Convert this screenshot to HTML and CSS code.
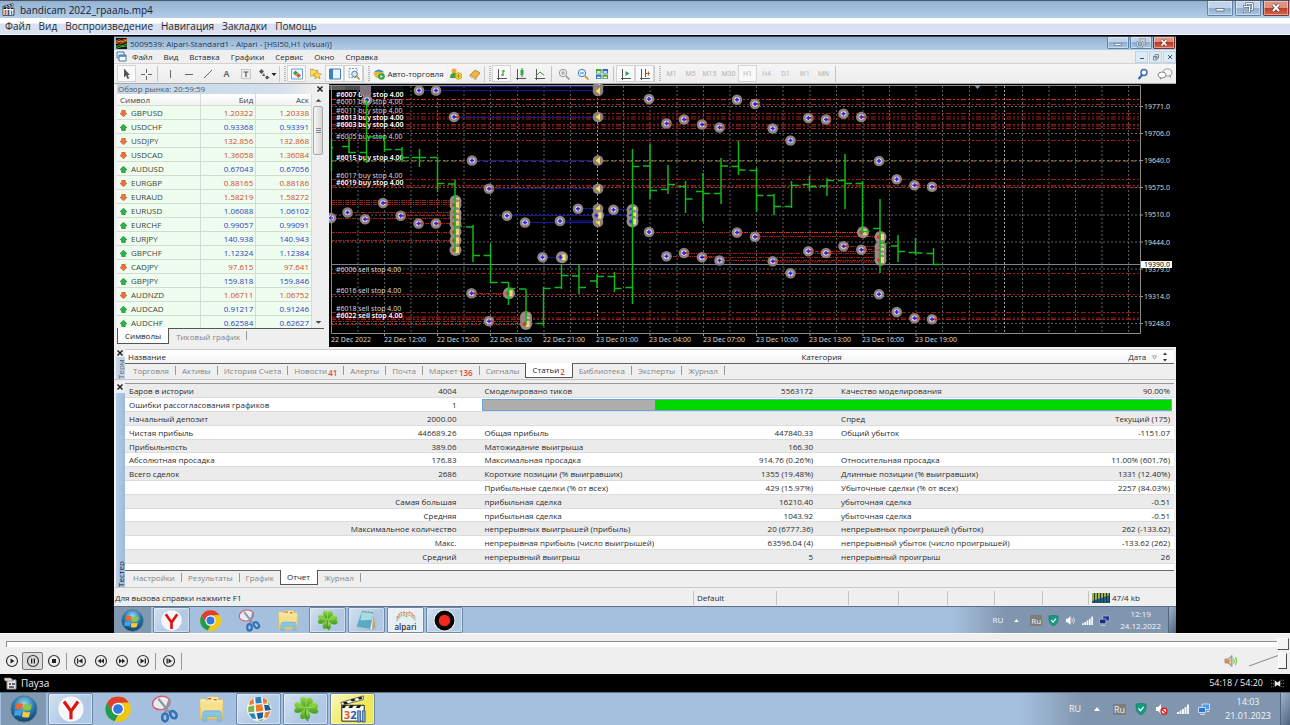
FILE: index.html
```html
<!DOCTYPE html>
<html lang="ru">
<head>
<meta charset="utf-8">
<title>bandicam 2022_грааль.mp4</title>
<link rel="stylesheet" href="styles.css">
</head>
<body>
<svg class="sprite" aria-hidden="true">
  <defs>
    <radialGradient id="orb" cx=".5" cy=".3" r=".75"><stop offset="0" stop-color="#9fd8ee"/><stop offset=".5" stop-color="#2a7db3"/><stop offset="1" stop-color="#0b3257"/></radialGradient>
    <linearGradient id="leaf" x2="0" y2="1"><stop offset="0" stop-color="#9bdc4a"/><stop offset="1" stop-color="#3f9a1c"/></linearGradient>
    <linearGradient id="fold" x2="0" y2="1"><stop offset="0" stop-color="#fbeeb0"/><stop offset="1" stop-color="#e9c95f"/></linearGradient>
  </defs>
  <symbol id="i-start" viewBox="0 0 30 30"><circle cx="15" cy="15" r="14" fill="url(#orb)" stroke="#4f7593"/><path d="M6.500 10q4-2 7.500-.5l-1.300 6q-3.500-1.500-7.500 0z" fill="#f0662f"/><path d="M15.500 9.500q3.500 2 8 .5l-1.500 6q-4 1.500-7.700-.5z" fill="#8cc83c"/><path d="M5 17q4-1.500 7.500 0l-1.300 5.500q-3.500-1.500-7 0z" fill="#3fa5ea"/><path d="M14 17.500q4 2 7.700.5l-1.300 5.500q-4 1.500-7.700-.5z" fill="#fbc93a"/></symbol>
  <symbol id="i-yandex" viewBox="0 0 30 30"><circle cx="15" cy="15" r="13.500" fill="#f7f7f9"/><path d="M7.500 7l7.500 10.500L22.500 7M15 17v9" fill="none" stroke="#e01010" stroke-width="3.400"/></symbol>
  <symbol id="i-chrome" viewBox="0 0 30 30"><circle cx="15" cy="15" r="13.500" fill="#f3c613"/><path d="M3.300 8.300A13.500 13.500 0 0 1 26.700 8.300L15 8.300 9.200 18.500z" fill="#dd4030"/><path d="M3.300 8.300l5.900 10.200 5.800 3-3.500 6.600A13.500 13.500 0 0 1 3.300 8.300z" fill="#239a50"/><path d="M11.500 28.100l9.300-9.600V8.300h5.900a13.500 13.500 0 0 1-15.200 19.800z" fill="#f3c613"/><circle cx="15" cy="15" r="6.700" fill="#fff"/><circle cx="15" cy="15" r="5.200" fill="#3278e0"/></symbol>
  <symbol id="i-snip" viewBox="0 0 30 30"><ellipse cx="11" cy="8.500" rx="9.500" ry="7" fill="#e9edf3" stroke="#d4606b" stroke-width="1.500" transform="rotate(-12 11 8.500)"/><path d="M8 4l12 15M20 4L15 19" stroke="#8e95a3" stroke-width="2.400"/><ellipse cx="15" cy="24" rx="3" ry="4.200" fill="none" stroke="#3273b8" stroke-width="2.800"/><ellipse cx="24" cy="21" rx="3" ry="4.200" fill="none" stroke="#3273b8" stroke-width="2.800" transform="rotate(-35 24 21)"/></symbol>
  <symbol id="i-folder" viewBox="0 0 30 30"><path d="M2 4h6l2 2V2h12v3h5v21H2z" fill="url(#fold)" stroke="#cfb25b" stroke-width=".6"/><path d="M11 4h3M17 5h3" stroke="#d64f3a" stroke-width="1.500"/><path d="M4 9h21v14H4z" fill="#f6df8d"/><path d="M5 28V20q0-3 3-3h14q3 0 3 3v8h-4v-5h-12v5z" fill="#86c5e6" stroke="#5fa7cf" stroke-width=".6"/></symbol>
  <symbol id="i-clover" viewBox="0 0 30 30"><g fill="url(#leaf)"><path d="M15 14C9 11 7 3 11 2q3-.5 4.500 2Q18 1.500 21 3.500c4 4-1 8.500-6 10.500z"/><path d="M15 14C10 20 3 21 2.500 17q0-2.500 2-3.500Q1.500 11.500 3 9c3-3.500 8 0 12 5z"/><path d="M15 14c4-6 10-7 12.500-4q1.500 2.500-1 4.500 3 2.500 1 4.500c-4 3-9 0-12.500-5z"/><path d="M15 14c4 4 6 10 3 12q-2.500 1-4.500-1-3 2-4.500-1c-1-4 2-7 6-10z"/></g><path d="M15 5v9L6 12.500M15 14l9-1.500M15 14l2 8" fill="none" stroke="#b9e87a" stroke-width=".7"/><path d="M15 14q-2 8 2 14" fill="none" stroke="#4d9a2a" stroke-width="1.300"/></symbol>
  <symbol id="i-notes" viewBox="0 0 30 30"><path d="M9 4l16 2 2 19-4 2-20-3z" fill="#f7f5ef" stroke="#999" stroke-width=".6"/><path d="M9 4l15 2-4 20-18-3z" fill="#5ea9c2"/><path d="M9 4l15 2-2 8-15 1z" fill="#a7dbe6"/><path d="M24 6l3 19-5 2z" fill="#b9a77f"/><path d="M9 3l15 2" stroke="#4f6f7c" stroke-width="1.500" stroke-dasharray="1 1"/></symbol>
  <symbol id="i-record" viewBox="0 0 30 30"><circle cx="15" cy="15" r="14" fill="#fff"/><circle cx="15" cy="15" r="13" fill="#050505"/><circle cx="15" cy="15" r="7.500" fill="#f4281c"/></symbol>
  <symbol id="i-globe" viewBox="0 0 30 30"><circle cx="15" cy="15" r="13.500" fill="#f1f5f7"/><g><path d="M11 2.500l6-.5 1 6.500-6.500.5z" fill="#2b82ba"/><path d="M19 2.500l5 3-1 4-3.500-.5z" fill="#ef7d2d"/><path d="M5 7l4-3.500.5 6L4.500 11z" fill="#ef7d2d"/><path d="M3.500 12.500l6-1.500.5 7-6.500.5z" fill="#7eb53c"/><path d="M11.500 10.500l7-.5 1 7-7.500 1z" fill="#ef7d2d"/><path d="M20.500 10.500l5 .5 2.500 5-6.500 1z" fill="#165f99"/><path d="M4 20l6-.5 2 6-4 0z" fill="#2b82ba"/><path d="M12.500 19.500l7-1-.5 6-5 1.500z" fill="#165f99"/><path d="M21.500 18.500l6-1-3.500 7-3.500 0z" fill="#ef7d2d"/><path d="M14 27l6-1.500-2 2.500z" fill="#7eb53c"/><path d="M25 7l2.500 5-3-2z" fill="#7eb53c"/></g><circle cx="15" cy="15" r="13.500" fill="none" stroke="#c0ccd4" stroke-width=".7"/></symbol>
  <symbol id="i-shield" viewBox="0 0 12 12"><path d="M6 0q3 1 5 1 1 8-5 11Q0 9 1 1q2 0 5-1z" fill="#149a7e" stroke="#0c6c5a" stroke-width=".5"/><path d="M3.500 5.500l2 2.200 3.200-3.800" fill="none" stroke="#fff" stroke-width="1.300"/></symbol>
  <symbol id="i-vol" viewBox="0 0 12 12"><path d="M1 4h2l3-3v10L3 8H1z" fill="#fff"/><path d="M7.500 4q1.200 2 0 4M9.300 2.500q2 3.500 0 7" fill="none" stroke="#e8eef5" stroke-width=".9"/></symbol>
  <symbol id="i-mute" viewBox="0 0 12 12"><path d="M0 4h2l3-3v10L2 8H0z" fill="#fff"/><circle cx="8" cy="8.300" r="3" fill="#fff" stroke="#dc2424" stroke-width="1.400"/><path d="M6 6.300l4 4" stroke="#dc2424" stroke-width="1.400"/></symbol>
  <symbol id="i-signal" viewBox="0 0 12 12"><path d="M1 11V9M3.500 11V7.500M6 11V6M8.500 11V4M11 11V1.500" stroke="#fff" stroke-width="1.800"/></symbol>
  <symbol id="i-net" viewBox="0 0 12 12"><path d="M4 1h7.500v5.500H4z" fill="#4a9cf0" stroke="#e4eefa" stroke-width=".8"/><path d="M.5 4.500h7v5h-7z" fill="#2f74d8" stroke="#e4eefa" stroke-width=".8"/><path d="M2 11.300h5M9 8.500h2.500" stroke="#dde9f7"/></symbol>
  <symbol id="i-netdark" viewBox="0 0 12 12"><path d="M4 1h7.500v5.500H4z" fill="#27378d" stroke="#b9c5d9" stroke-width=".8"/><path d="M.5 4.500h7v5h-7z" fill="#1c2a78" stroke="#b9c5d9" stroke-width=".8"/><path d="M2 11.300h5" stroke="#cdd6e4"/></symbol>
  <symbol id="i-min" viewBox="0 0 12 12"><path d="M2 6.500h8v2.500H2z" fill="#fff" stroke="#55687f" stroke-width=".8"/></symbol>
  <symbol id="i-restore" viewBox="0 0 12 12"><path d="M4.500 1.500h6v6h-6z" fill="#c9dbee" stroke="#44566c" stroke-width="2"/><path d="M4.500 1.500h6v6h-6z" fill="none" stroke="#fff"/><path d="M2 4.500h5.500v5.500H2z" fill="#8fb0d2" stroke="#44566c" stroke-width="2"/><path d="M2 4.500h5.500v5.500H2z" fill="none" stroke="#fff"/></symbol>
  <symbol id="i-close" viewBox="0 0 12 12"><path d="M3 2.500l6 6.500M9 2.500L3 9" stroke="#6b3b36" stroke-width="3.400"/><path d="M3 2.500l6 6.500M9 2.500L3 9" stroke="#fff" stroke-width="2"/></symbol>
  <symbol id="i-up" viewBox="0 0 8 8"><path d="M4 .3L7.800 4 6 5v2.500H2V5L.2 4z" fill="#2db44a" stroke="#15702a" stroke-width=".7"/></symbol>
  <symbol id="i-down" viewBox="0 0 8 8"><path d="M4 7.700L.2 4 2 3V.5h4V3l1.800 1z" fill="#f2723c" stroke="#b3441c" stroke-width=".7"/></symbol>
</svg>

<div class="screen">
  <header class="titlebar">
    <svg class="ic13" viewBox="0 0 13 13"><path d="M1 5h11v7.500H1z" fill="#fafaf4" stroke="#222" stroke-width=".7"/><path d="M.5 3.500L11 .5l.5 2L1 5z" fill="#fff" stroke="#222" stroke-width=".6"/><path d="M2 3.500l2 1M5 2.500l2 1M8 1.500l2 1M2 5.500h2M5.500 5.500h2M9 5.500h2" stroke="#111" stroke-width="1.200"/><path d="M3.500 7v5" stroke="#df5a24" stroke-width="1.800"/><path d="M6.500 7v5" stroke="#2757b8" stroke-width="1.800"/><path d="M9.500 7.500v5M11.500 7.500v5" stroke="#5a86c0" stroke-width="1.300"/></svg>
    <h1>bandicam 2022_грааль.mp4</h1>
    <div class="winbtns">
      <button type="button" aria-label="Свернуть"><svg><use href="#i-min"/></svg></button>
      <button type="button" aria-label="Восстановить"><svg><use href="#i-restore"/></svg></button>
      <button type="button" class="red" aria-label="Закрыть"><svg><use href="#i-close"/></svg></button>
    </div>
  </header>
  <nav class="menubar">
    <button type="button">Файл</button><button type="button">Вид</button><button type="button">Воспроизведение</button><button type="button">Навигация</button><button type="button">Закладки</button><button type="button">Помощь</button>
  </nav>

  <main class="video">
    <section class="desk">
      <header class="titlebar small">
        <svg class="ic11" viewBox="0 0 11 11"><path d="M0 0h11v11H0z" fill="#171411"/><path d="M0 3l3-1.500 2 1L11 1M0 6l3-1.500 2 1 6-2" stroke="#e04a22" fill="none"/><path d="M0 4.500l3-1.500 2 1 6-2" stroke="#e0b422" fill="none"/><path d="M0 9l3-2 2 1 6-2M0 10.500l4-1.500 7-1" stroke="#3faa35" fill="none"/></svg>
        <h2>5009539: Alpari-Standard1 - Alpari - [HSI50,H1 (visual)]</h2>
        <div class="winbtns">
          <button type="button" aria-label="Свернуть"><svg><use href="#i-min"/></svg></button>
          <button type="button" aria-label="Восстановить"><svg><use href="#i-restore"/></svg></button>
          <button type="button" class="red" aria-label="Закрыть"><svg><use href="#i-close"/></svg></button>
        </div>
      </header>
      <nav class="menubar mt">
        <svg class="ic11" viewBox="0 0 11 11"><path d="M1 1h7v6H1z" fill="#e8f2fb" stroke="#3f78b5"/><path d="M3 4h7v6H3z" fill="#fff" stroke="#3f78b5"/><path d="M3 5h7" stroke="#3f78b5" stroke-width="1.500"/></svg>
        <button type="button">Файл</button><button type="button">Вид</button><button type="button">Вставка</button><button type="button">Графики</button><button type="button">Сервис</button><button type="button">Окно</button><button type="button">Справка</button>
        <div class="mdi"><button type="button" aria-label="Свернуть график"><svg viewBox="0 0 8 8"><path d="M2 5.500h4" stroke="#456"/></svg></button><button type="button" aria-label="Восстановить график"><svg viewBox="0 0 8 8"><path d="M3 1.500h3.500V5H3zM1.500 3.500H5V7H1.500z" fill="none" stroke="#567" stroke-width=".7"/></svg></button><button type="button" aria-label="Закрыть график"><svg viewBox="0 0 8 8"><path d="M2 2l4 4M6 2L2 6" stroke="#456"/></svg></button></div>
      </nav>

      <div class="toolbar">
        <button type="button" class="on" aria-label="Курсор"><svg viewBox="0 0 12 12"><path d="M3 .5v9l2-2 1.500 3.500 1.700-.8L6.700 7H9z" fill="#555"/></svg></button>
        <button type="button" aria-label="Перекрестие"><svg viewBox="0 0 12 12"><path d="M6.500 1v4M6.500 8v4M1 6.500h4M8 6.500h4" stroke="#666"/></svg></button>
        <i class="sep"></i>
        <button type="button" aria-label="Вертикальная линия"><svg viewBox="0 0 12 12"><path d="M6.500 2v8" stroke="#666"/></svg></button>
        <button type="button" aria-label="Горизонтальная линия"><svg viewBox="0 0 12 12"><path d="M2 6.500h8" stroke="#666"/></svg></button>
        <button type="button" aria-label="Трендовая линия"><svg viewBox="0 0 12 12"><path d="M2 10l8-8" stroke="#666"/></svg></button>
        <button type="button" class="glyph">A</button>
        <button type="button" aria-label="Метка"><svg viewBox="0 0 12 12"><path d="M1.500 1.500h9v9h-9z" fill="none" stroke="#999" stroke-dasharray="1 1"/><path d="M3.500 4h5M6 4v5" stroke="#555" stroke-width="1.200"/></svg></button>
        <button type="button" class="arrows" aria-label="Стрелки"><svg viewBox="0 0 20 12"><path d="M2 3.500L4.500 1 7 3.500 4.500 6zM7 5l-2 3h3M8 9.500l2-2 2.500 2-2.500 2z" fill="#555"/><path d="M14.500 5h5L17 8z" fill="#222"/></svg></button>
        <i class="grip"></i>
        <button type="button" class="on" aria-label="Обзор рынка"><svg viewBox="0 0 12 12"><path d="M.5 1h11v10H.5z" fill="#eef6fd" stroke="#6aa1d8"/><path d="M4.500 2.500L7 5 4.500 7.500 2 5z" fill="#2ea24a"/><path d="M7.500 5l2.500 2.500L7.500 10 5 7.500z" fill="#e0552b"/></svg></button>
        <button type="button" aria-label="Навигатор"><svg viewBox="0 0 13 12"><path d="M0 1h4l1 1h3v6H0z" fill="#f5d774" stroke="#c59b2c"/><path d="M8 3l1.300 2.700 3 .4-2.200 2 .6 3L8 9.700l-2.700 1.400.6-3-2.200-2 3-.4z" fill="#ffdb45" stroke="#b98c16" stroke-width=".7"/></svg></button>
        <button type="button" class="on" aria-label="Терминал"><svg viewBox="0 0 12 12"><path d="M.5 1h11v10H.5z" fill="#eaf3fb" stroke="#3f7fbd"/><path d="M1 1h3v10H1z" fill="#3f7fbd"/></svg></button>
        <button type="button" class="on" aria-label="Тестер"><svg viewBox="0 0 12 12"><path d="M1 .5h8v9H1z" fill="#f4f8fc" stroke="#7ba4cf" stroke-dasharray="2 1"/><circle cx="6.500" cy="6" r="2.800" fill="#d5e8f8" stroke="#5786ae"/><path d="M8.500 8l3 3.500" stroke="#c9962c" stroke-width="1.700"/></svg></button>
        <i class="grip"></i>
        <button type="button" class="auto"><svg viewBox="0 0 12 12"><path d="M1 4q5-5 10 0l-5 2z" fill="#3c8fca"/><path d="M0 5q6-3 11 0l-2 5H3z" fill="#e6b93c"/><circle cx="8.500" cy="8.500" r="3.300" fill="#2fa83c"/><path d="M7.500 7v3l2.500-1.500z" fill="#fff"/></svg>Авто-торговля</button>
        <button type="button" aria-label="Эксперт"><svg viewBox="0 0 12 12"><circle cx="4" cy="3" r="2.500" fill="#f0a92e"/><path d="M0 10q0-5 4-5t4 5z" fill="#3fa03b"/><circle cx="8.500" cy="8" r="3.300" fill="#fbd831" stroke="#b98b12" stroke-width=".7"/><path d="M8.500 6v4M6.500 8h4" stroke="#a57b10" stroke-width=".8"/></svg></button>
        <button type="button" aria-label="Справочник"><svg viewBox="0 0 12 12"><path d="M1 7l5-5 5 3-4 5z" fill="#f2b63a" stroke="#a76f15" stroke-width=".7"/><path d="M1 7l6 3v1.500l-6-3z" fill="#fff" stroke="#a76f15" stroke-width=".6"/></svg></button>
        <i class="grip"></i>
        <button type="button" class="on" aria-label="Бары"><svg viewBox="0 0 12 12"><path d="M2.500 1v11M1 10.500h10" stroke="#555"/><path d="M7 2v6M7 3h2M5 7h2" stroke="#2b9a3c" stroke-width="1.200"/></svg></button>
        <button type="button" aria-label="Свечи"><svg viewBox="0 0 12 12"><path d="M2.500 1v11M1 10.500h10" stroke="#555"/><path d="M7 0v9" stroke="#1c7a2c"/><path d="M5.500 2h3v5h-3z" fill="#2dae45"/></svg></button>
        <button type="button" aria-label="Линия"><svg viewBox="0 0 12 12"><path d="M2.500 1v11M1 10.500h10" stroke="#555"/><path d="M2 8l4-4 4 3" fill="none" stroke="#4a9655"/></svg></button>
        <i class="sep"></i>
        <button type="button" aria-label="Увеличить"><svg viewBox="0 0 12 12"><circle cx="5" cy="5" r="3.700" fill="#eee" stroke="#999"/><path d="M3 5h4M5 3v4" stroke="#999"/><path d="M8 8l3.500 3.500" stroke="#999" stroke-width="1.600"/></svg></button>
        <button type="button" aria-label="Уменьшить"><svg viewBox="0 0 12 12"><circle cx="5" cy="5" r="3.700" fill="#e3f1fc" stroke="#3b82c4"/><path d="M3 5h4" stroke="#3b82c4"/><path d="M8 8l3.500 3.500" stroke="#d29b2c" stroke-width="1.800"/></svg></button>
        <button type="button" aria-label="Плитка"><svg viewBox="0 0 12 12"><path d="M0 1h5.500v4.500H0zM6.500 6.500H12V11H6.500z" fill="#45a33b"/><path d="M6.500 1H12v4.500H6.500zM0 6.500h5.500V11H0z" fill="#2b6fbe"/><path d="M1 4h3.500M7.500 4H11M1 9.500h3.500M7.500 9.500H11" stroke="#fff" stroke-width="1.300"/></svg></button>
        <i class="sep"></i>
        <button type="button" class="on" aria-label="Автопрокрутка"><svg viewBox="0 0 12 12"><path d="M2.500 1v11M1 10.500h10" stroke="#555"/><path d="M5.500 3v5L9.500 5.500z" fill="#2ba341"/></svg></button>
        <button type="button" class="on" aria-label="Сдвиг"><svg viewBox="0 0 12 12"><path d="M2.500 1v11M1 10.500h10" stroke="#555"/><path d="M6.500 1v8" stroke="#2b62a8"/><path d="M7 5.500h4M9.500 3.500v4" stroke="#c85a28"/></svg></button>
        <i class="grip"></i>
        <button type="button" class="tf">M1</button><button type="button" class="tf">M5</button><button type="button" class="tf">M15</button><button type="button" class="tf">M30</button><button type="button" class="tf on">H1</button><button type="button" class="tf">H4</button><button type="button" class="tf">D1</button><button type="button" class="tf">W1</button><button type="button" class="tf">MN</button>
        <i class="sep"></i>
        <div class="tail">
          <button type="button" aria-label="Поиск"><svg viewBox="0 0 12 12"><circle cx="7" cy="4.500" r="3" fill="#fff" stroke="#3a63b4" stroke-width="1.400"/><path d="M5 7l-3.500 4" stroke="#3a63b4" stroke-width="2"/></svg></button>
          <button type="button" class="chat" aria-label="Чат"><svg viewBox="0 0 16 12"><ellipse cx="10.500" cy="4.500" rx="4.500" ry="3.500" fill="#f6f6f6" stroke="#999"/><path d="M12 8l2 2v-3z" fill="#999"/><ellipse cx="5" cy="7" rx="4" ry="3" fill="#fff" stroke="#888"/><path d="M3 9.500L3 12l2-2z" fill="#999"/></svg></button>
        </div>
      </div>

      <div class="work">
        <aside class="market">
          <div class="caption"><span>Обзор рынка: 20:59:59</span><button type="button" aria-label="Закрыть обзор рынка"><svg class="x" viewBox="0 0 8 8"><path d="M1.500 1.500l5 5M6.500 1.500l-5 5"/></svg></button></div>
          <div class="quotes">
            <table>
              <colgroup><col class="c-sym"><col><col></colgroup>
              <thead><tr><th>Символ</th><th>Бид</th><th>Аск</th></tr></thead>
              <tbody>
                <tr class="dn"><td><svg><use href="#i-down"/></svg>GBPUSD</td><td>1.20322</td><td>1.20338</td></tr>
                <tr><td><svg><use href="#i-up"/></svg>USDCHF</td><td>0.93368</td><td>0.93391</td></tr>
                <tr class="dn"><td><svg><use href="#i-down"/></svg>USDJPY</td><td>132.856</td><td>132.868</td></tr>
                <tr class="dn"><td><svg><use href="#i-down"/></svg>USDCAD</td><td>1.36058</td><td>1.36084</td></tr>
                <tr><td><svg><use href="#i-up"/></svg>AUDUSD</td><td>0.67043</td><td>0.67056</td></tr>
                <tr class="dn"><td><svg><use href="#i-down"/></svg>EURGBP</td><td>0.88165</td><td>0.88186</td></tr>
                <tr class="dn"><td><svg><use href="#i-down"/></svg>EURAUD</td><td>1.58219</td><td>1.58272</td></tr>
                <tr><td><svg><use href="#i-up"/></svg>EURUSD</td><td>1.06088</td><td>1.06102</td></tr>
                <tr><td><svg><use href="#i-up"/></svg>EURCHF</td><td>0.99057</td><td>0.99091</td></tr>
                <tr><td><svg><use href="#i-up"/></svg>EURJPY</td><td>140.938</td><td>140.943</td></tr>
                <tr><td><svg><use href="#i-up"/></svg>GBPCHF</td><td>1.12324</td><td>1.12384</td></tr>
                <tr class="dn"><td><svg><use href="#i-down"/></svg>CADJPY</td><td>97.615</td><td>97.641</td></tr>
                <tr><td><svg><use href="#i-up"/></svg>GBPJPY</td><td>159.818</td><td>159.846</td></tr>
                <tr class="dn"><td><svg><use href="#i-down"/></svg>AUDNZD</td><td>1.06711</td><td>1.06752</td></tr>
                <tr><td><svg><use href="#i-up"/></svg>AUDCAD</td><td>0.91217</td><td>0.91246</td></tr>
                <tr><td><svg><use href="#i-up"/></svg>AUDCHF</td><td>0.62584</td><td>0.62627</td></tr>
              </tbody>
            </table>
            <div class="scroll"><svg viewBox="0 0 8 8"><path d="M1.500 5.500h5L4 3z" fill="#444"/></svg><div class="thumb"></div><svg class="end" viewBox="0 0 8 8"><path d="M1.500 3h5L4 5.500z" fill="#444"/></svg></div>
          </div>
          <div class="tabs"><button type="button" class="active">Символы</button><button type="button">Тиковый график</button></div>
        </aside>

        <svg class="chart" viewBox="329 84 847 263" role="img" aria-label="График HSI50,H1">
          <defs>
            <g id="m"><circle r="5.300" fill="#8e817b"/><circle r="2.800" fill="#d9d6ea"/><path d="M-2 0H2M0-2V2" stroke="#2a22e0" stroke-width="1.500"/></g>
            <g id="n"><circle r="5.300" fill="#8e817b"/><circle r="2.800" fill="#e6d6dc"/><path d="M0 0h5" stroke="#c2402c" stroke-width="2"/><path d="M-2 0H2M0-2V2" stroke="#2a22e0" stroke-width="1.500"/></g>
            <g id="y"><circle r="5.300" fill="#8e817b"/><path d="M-2.500 0L2-3.500V3.500z" fill="#f5e14b"/></g>
            <g id="r"><circle r="6" fill="#948a86"/><path d="M0-3h3.500v6H0z" fill="#f0d27c"/><path d="M-3.500 0h4M-1.500-2V2" stroke="#e62c20" stroke-width="1.700"/></g>
            <g id="b"><circle r="6" fill="#948a86"/><path d="M0-3h3.500v6H0z" fill="#f0e27c"/><path d="M-3.500 0h4M-1.500-2V2" stroke="#2a22e0" stroke-width="1.500"/></g>
          </defs>
          <path d="M329 84H1176V347H329z" fill="#000"/>
          <g class="grid">
            <path d="M358 86V333M384.500 86V333M411 86V333M437.500 86V333M464 86V333M490.500 86V333M517.500 86V333M544 86V333M570.500 86V333M623.500 86V333M650 86V333M677 86V333M703.500 86V333M730 86V333M756.500 86V333M783 86V333M810 86V333M836.500 86V333M863 86V333M889.500 86V333M916 86V333M942.500 86V333M969.500 86V333M996 86V333M1022.500 86V333M1049 86V333M1075.500 86V333M1102 86V333M1128.500 86V333"/>
            <path d="M331 106.500H1140M331 133.500H1140M331 160.500H1140M331 187.500H1140M331 215H1140M331 242H1140M331 269H1140M331 296.500H1140M331 323.500H1140"/>
            <path class="day" d="M597.500 86V333M1004.500 86V333"/>
          </g>
          <path class="stops" d="M331 104.500H1140M331 113.500H1140M331 117H1140M331 119H1140M331 124.500H1140M331 126H1140M331 128.500H1140M331 140.500H1140M331 179.500H1140M331 185.500H1140M331 187H1140M331 273.500H1140M331 294.500H1140M331 312.500H1140M331 318H1140M331 319.500H1140"/>
          <path class="stops hot" d="M331 99.500H1140"/>
          <path class="stops gold" d="M331 161H1140"/>
          <path class="loss" d="M331 200.500H455M331 202.500H455M331 204.500H455M347 212.500H455M400 215.500H455M331 218.500H455M418 223.500H455M331 232.500H455M331 240.500H455M331 317H520M331 321.500H520M489 324.500H526M331 324.500H480M472 293.500H508M755 236.500H880M649 232.500H737M684 253.500H880M702 257.500H880M666 256.500H720M719 260.500H880M772 262H880M843 246.500H880M861 249.500H880M808 251.500H880"/>
          <path class="loss hot" d="M737 232.500H862"/>
          <path class="gain" d="M421 90.500H598M436 86.500H598M472 160.500H598M454 117.500H598M507 215.500H598M525 222.500H598M560 221H598M578 208.500H598M613 209.500H632M598 215H632M542 257.500H561"/>
          <path class="gain dash" d="M489 188.500H598"/>
          <path d="M331 264.500H1140" stroke="#7a8592"/>

          <g class="lbl">
            <text x="336" y="97" class="dbl">#6007 buy stop 4.00</text><text x="336" y="104">#6001 buy stop 4.00</text>
            <text x="336" y="113">#6011 buy stop 4.00</text><text x="336" y="120" class="dbl">#6013 buy stop 4.00</text><text x="336" y="127" class="dbl">#6003 buy stop 4.00</text>
            <text x="336" y="139">#6005 buy stop 4.00</text>
            <text x="336" y="160" class="dbl">#6015 buy stop 4.00</text>
            <text x="336" y="178">#6017 buy stop 4.00</text>
            <text x="336" y="185" class="dbl">#6019 buy stop 4.00</text>
            <text x="336" y="272">#6006 sell stop 4.00</text>
            <text x="336" y="293">#6016 sell stop 4.00</text>
            <text x="336" y="311">#6018 sell stop 4.00</text>
            <text x="336" y="318" class="dbl">#6022 sell stop 4.00</text>
          </g>

          <g>
            <use href="#m" x="419" y="90.500"/><use href="#m" x="436" y="90.500"/><use href="#y" x="598" y="87"/><use href="#y" x="598" y="91"/><use href="#m" x="367" y="100"/>
            <use href="#n" x="454" y="117"/><use href="#y" x="598" y="117"/><use href="#m" x="472" y="160.500"/><use href="#y" x="598" y="160.500"/><use href="#n" x="489" y="188.700"/><use href="#y" x="598" y="188.700"/>
            <use href="#m" x="331" y="218"/><use href="#m" x="347.500" y="212.500"/><use href="#n" x="365" y="219.300"/><use href="#n" x="383" y="203"/><use href="#n" x="400.700" y="215.700"/><use href="#n" x="418.500" y="223.500"/><use href="#n" x="436" y="223.500"/>
            <use href="#r" x="455.500" y="201"/><use href="#r" x="455.500" y="205"/><use href="#r" x="455.500" y="213"/><use href="#r" x="455.500" y="218"/><use href="#r" x="455.500" y="224"/><use href="#r" x="455.500" y="232"/><use href="#r" x="455.500" y="240.500"/><use href="#r" x="455.500" y="250"/>
            <use href="#m" x="507" y="215.700"/><use href="#m" x="525" y="222.500"/><use href="#m" x="560" y="221"/><use href="#m" x="578" y="208.700"/>
            <use href="#y" x="598" y="208.700"/><use href="#y" x="598" y="222"/><use href="#b" x="598" y="215.500"/><use href="#m" x="613.500" y="209.700"/><use href="#b" x="632.500" y="210"/><use href="#b" x="632.500" y="215.500"/><use href="#b" x="632.500" y="221.500"/>
            <use href="#m" x="542.500" y="257.300"/><use href="#b" x="562" y="257.300"/><use href="#n" x="471.500" y="293.300"/><use href="#r" x="509" y="293.300"/><use href="#n" x="489" y="321.300"/><use href="#r" x="526" y="317"/><use href="#r" x="526" y="320"/><use href="#r" x="526" y="324"/>
            <use href="#m" x="649" y="99"/><use href="#n" x="666.500" y="123.500"/><use href="#n" x="684" y="119.500"/><use href="#n" x="702" y="124.500"/><use href="#n" x="719.500" y="127.500"/><use href="#m" x="737" y="99.700"/><use href="#n" x="755" y="104"/><use href="#m" x="772.700" y="128.500"/><use href="#m" x="790.500" y="140.500"/><use href="#n" x="808.300" y="118"/><use href="#n" x="826" y="119.500"/><use href="#m" x="843.500" y="113.700"/><use href="#n" x="861.300" y="117"/><use href="#m" x="879" y="161"/>
            <use href="#m" x="649" y="232"/><use href="#m" x="666.500" y="256.300"/><use href="#n" x="684" y="253"/><use href="#n" x="702" y="257.300"/><use href="#m" x="719.500" y="260.500"/><use href="#n" x="737" y="232.500"/><use href="#n" x="755" y="236.700"/><use href="#n" x="772.700" y="261.300"/><use href="#m" x="790.500" y="273.300"/><use href="#n" x="808.300" y="251.300"/><use href="#n" x="826" y="253"/><use href="#n" x="843.500" y="246.300"/><use href="#n" x="861.300" y="249.700"/><use href="#r" x="863" y="232.300"/>
            <use href="#r" x="880.500" y="237"/><use href="#r" x="880.500" y="247"/><use href="#r" x="880.500" y="251"/><use href="#r" x="880.500" y="256"/><use href="#r" x="880.500" y="260"/><use href="#m" x="879" y="294.300"/>
            <use href="#m" x="896.700" y="179.300"/><use href="#n" x="914.500" y="185.300"/><use href="#n" x="932" y="186.700"/><use href="#m" x="896.700" y="312"/><use href="#n" x="914.500" y="318.300"/><use href="#n" x="932" y="319.300"/>
          </g>
          <path class="bars" d="M331.500 138V171M331 147.500h2M349 137V153M342 146.500h7M349 152.500h7M366.500 100V163M359.500 152.500h7M366.500 137h7M384.500 136V152M377.500 137h7M384.500 149.500h7M402 147V162M395 149.500h7M402 157.500h7M419.500 149V167M412 157.500h14M437.500 157V192M430 157.500h7M437.500 183.500h7M455 180V252M448 184h7M455 226.500h7M473 225V262M466 227h7M473 255.500h7M490.500 244V283M483.500 255.500h7M490.500 282.500h7M508.500 282V305M501 282.500h7M508.500 288.500h7M526 289V325M519 289h7M543.500 287V326M536.500 323.500h7M543.500 288.500h7M561.500 265V289M554.500 287.500h7M561.500 275.500h7M579 265V294M572 276h7M579 287.500h7M597 274V288M590 281h7M597 276.500h7M614.500 272V292M607.500 276.500h7M614.500 288.500h7M632.500 149V304M625.500 287.500h7M632.500 166.500h7M650 144V199M643 166h7M650 190.500h7M668 165V194M661 189.500h7M668 184.500h7M685.500 181V213M678.500 186.500h7M685.500 199h7M703 173V222M696 191.500h7M703 193.500h7M721 158V204M714 193.500h7M721 166h7M738.500 141V175M731.500 166.500h7M738.500 170h7M756.500 168V212M749.500 170.500h7M756.500 195.500h7M774 194V215M767 195.500h7M774 206.500h7M791.500 181V208M784.500 206.500h7M791.500 185.500h7M809.500 176V191M802.500 184.500h7M809.500 186.500h7M827 178V196M820 186h7M827 180.500h7M845 154V209M838 180.500h7M845 183.500h7M862.500 181V233M855.500 183.500h7M862.500 231.500h7M880 199V273M873 228.500h7M880 243.500h7M898 235V262M891 246h7M898 251.500h7M915.500 238V255M908.500 252.500h7M915.500 253h7M933.500 248V265M926.500 253.500h7M933.500 264.500h7"/>

          <path d="M329 85h16v5h-16z" fill="#5b5858"/><path d="M345 85h15v5h-15z" fill="#4c494c"/><path d="M360 85h11v10h-11z" fill="#7b7480"/><path d="M371 85h32v5h-32z" fill="#0b0c18"/>
          <path d="M331.500 86V333.500H1140.500V85.500H329" fill="none" stroke="#8b8b8b"/>
          <path d="M974 85h7l-3.500 4z" fill="#8d99a5"/>
          <g class="axis">
            <path d="M1140 106.500h3M1140 133.500h3M1140 160.500h3M1140 187.500h3M1140 215h3M1140 242h3M1140 269h3M1140 296.500h3M1140 323.500h3M384.500 333v3M437.500 333v3M490.500 333v3M544 333v3M597.500 333v3M650 333v3M703.500 333v3M756.500 333v3M810 333v3M863 333v3M916 333v3" stroke="#999"/>
            <text x="1144" y="109">19771.0</text><text x="1144" y="136">19706.0</text><text x="1144" y="163">19640.0</text><text x="1144" y="190">19575.0</text><text x="1144" y="217">19510.0</text><text x="1144" y="245">19444.0</text><text x="1144" y="272">19379.0</text><text x="1144" y="299">19314.0</text><text x="1144" y="326">19248.0</text>
            <path d="M1141 261h31v7h-31z" fill="#fff"/><text x="1144" y="267" class="now">19390.0</text>
            <text x="331" y="342">22 Dec 2022</text><text x="384" y="342">22 Dec 12:00</text><text x="437" y="342">22 Dec 15:00</text><text x="490" y="342">22 Dec 18:00</text><text x="543" y="342">22 Dec 21:00</text><text x="596" y="342">23 Dec 01:00</text><text x="649" y="342">23 Dec 04:00</text><text x="703" y="342">23 Dec 07:00</text><text x="756" y="342">23 Dec 10:00</text><text x="809" y="342">23 Dec 13:00</text><text x="862" y="342">23 Dec 16:00</text><text x="915" y="342">23 Dec 19:00</text>
          </g>
        </svg>
      </div>

      <section class="dock term">
        <div class="side"><button type="button" aria-label="Закрыть терминал"><svg class="x" viewBox="0 0 8 8"><path d="M1.500 1.500l5 5M6.500 1.500l-5 5"/></svg></button><span>Терм</span></div>
        <div class="body">
          <div class="heads"><span>Название</span><span>Категория</span><span class="date">Дата <svg viewBox="0 0 6 6"><path d="M.5 1h5L3 5z" fill="none" stroke="#999"/></svg></span><svg class="spin" viewBox="0 0 6 12"><path d="M1 4h4L3 1.500zM1 8h4L3 10.500z" fill="#333"/></svg></div>
          <div class="tabs"><button type="button">Торговля</button><button type="button">Активы</button><button type="button">История Счета</button><button type="button">Новости<sub>41</sub></button><button type="button">Алерты</button><button type="button">Почта</button><button type="button">Маркет<sub>136</sub></button><button type="button">Сигналы</button><button type="button" class="active">Статьи<sub>2</sub></button><button type="button">Библиотека</button><button type="button">Эксперты</button><button type="button">Журнал</button></div>
        </div>
      </section>

      <section class="dock tester">
        <div class="side"><button type="button" aria-label="Закрыть тестер"><svg class="x" viewBox="0 0 8 8"><path d="M1.500 1.500l5 5M6.500 1.500l-5 5"/></svg></button><span>Тестер</span></div>
        <div class="body">
          <div class="sheet">
          <table>
            <colgroup><col class="k1"><col class="v1"><col class="k2"><col class="v2"><col class="k2"><col class="v3"></colgroup>
            <tbody>
              <tr><td>Баров в истории</td><td>4004</td><td>Смоделировано тиков</td><td>5563172</td><td>Качество моделирования</td><td>90.00%</td></tr>
              <tr><td>Ошибки рассогласования графиков</td><td>1</td><td colspan="4" class="gauge"><div><i></i></div></td></tr>
              <tr><td>Начальный депозит</td><td>2000.00</td><td></td><td></td><td>Спред</td><td>Текущий (175)</td></tr>
              <tr><td>Чистая прибыль</td><td>446689.26</td><td>Общая прибыль</td><td>447840.33</td><td>Общий убыток</td><td>-1151.07</td></tr>
              <tr><td>Прибыльность</td><td>389.06</td><td>Матожидание выигрыша</td><td>166.30</td><td></td><td></td></tr>
              <tr><td>Абсолютная просадка</td><td>176.83</td><td>Максимальная просадка</td><td>914.76 (0.26%)</td><td>Относительная просадка</td><td>11.00% (601.76)</td></tr>
              <tr><td>Всего сделок</td><td>2686</td><td>Короткие позиции (% выигравших)</td><td>1355 (19.48%)</td><td>Длинные позиции (% выигравших)</td><td>1331 (12.40%)</td></tr>
              <tr><td></td><td></td><td>Прибыльные сделки (% от всех)</td><td>429 (15.97%)</td><td>Убыточные сделки (% от всех)</td><td>2257 (84.03%)</td></tr>
              <tr><td></td><td>Самая большая</td><td>прибыльная сделка</td><td>16210.40</td><td>убыточная сделка</td><td>-0.51</td></tr>
              <tr><td></td><td>Средняя</td><td>прибыльная сделка</td><td>1043.92</td><td>убыточная сделка</td><td>-0.51</td></tr>
              <tr><td></td><td>Максимальное количество</td><td>непрерывных выигрышей (прибыль)</td><td>20 (6777.36)</td><td>непрерывных проигрышей (убыток)</td><td>262 (-133.62)</td></tr>
              <tr><td></td><td>Макс.</td><td>непрерывная прибыль (число выигрышей)</td><td>63596.04 (4)</td><td>непрерывный убыток (число проигрышей)</td><td>-133.62 (262)</td></tr>
              <tr><td></td><td>Средний</td><td>непрерывный выигрыш</td><td>5</td><td>непрерывный проигрыш</td><td>26</td></tr>
            </tbody>
          </table>
          </div>
          <div class="tabs"><button type="button">Настройки</button><button type="button">Результаты</button><button type="button">График</button><button type="button" class="active">Отчет</button><button type="button">Журнал</button></div>
        </div>
      </section>

      <footer class="status"><span>Для вызова справки нажмите F1</span><span>Default</span><span></span><span></span><span></span><span></span><span></span><span></span><span class="net"><svg viewBox="0 0 18 10"><path d="M0 0h18v10H0z" fill="#a3ae3d"/><path d="M0 10V8L18 2v8z" fill="#1d5f86"/><path d="M2.500 0v10M5.500 0v10M8.500 0v10M11.500 0v10M14.500 0v10M17.500 0v10" stroke="#1b3a3c"/></svg>47/4 kb</span></footer>

      <div class="taskbar inner">
        <button type="button" class="start" aria-label="Пуск"><svg><use href="#i-start"/></svg></button>
        <button type="button" class="run" aria-label="Яндекс"><svg><use href="#i-yandex"/></svg></button>
        <button type="button" aria-label="Chrome"><svg><use href="#i-chrome"/></svg></button>
        <button type="button" aria-label="Ножницы"><svg><use href="#i-snip"/></svg></button>
        <button type="button" aria-label="Проводник"><svg><use href="#i-folder"/></svg></button>
        <button type="button" class="run" aria-label="Клевер"><svg><use href="#i-clover"/></svg></button>
        <button type="button" class="run" aria-label="Блокнот"><svg><use href="#i-notes"/></svg></button>
        <button type="button" class="run alpari"><svg viewBox="0 0 26 13"><g fill="none" stroke-width="1.200" stroke-dasharray="2.500 1"><path d="M2 8Q8-2 13 3q5-5 11 5" stroke="#e06a62"/><path d="M2 10Q8 0 13 5q5-5 11 5" stroke="#e5a050"/><path d="M2 12Q8 2 13 7q5-5 11 5" stroke="#8bc26a"/></g></svg>alpari</button>
        <button type="button" class="run" aria-label="Запись"><svg><use href="#i-record"/></svg></button>
        <div class="tray">
          <span class="lang">RU</span><svg class="car" viewBox="0 0 6 4"><path d="M0 4h6L3 0z" fill="#fff"/></svg><span class="ru">Ru</span>
          <svg><use href="#i-shield"/></svg><svg><use href="#i-vol"/></svg><svg><use href="#i-signal"/></svg><svg><use href="#i-netdark"/></svg>
          <time>12:19<br>24.12.2022</time><i class="peek"></i>
        </div>
      </div>
    </section>
  </main>

  <section class="player">
    <input class="seek" type="range" min="0" max="3260" value="3260" aria-label="Позиция">
    <div class="controls">
      <button type="button" aria-label="Играть"><svg viewBox="0 0 14 14"><circle cx="7" cy="7" r="5.500"/><path d="M5.500 4.500v5L9.500 7z"/></svg></button>
      <button type="button" class="on" aria-label="Пауза"><svg viewBox="0 0 14 14"><circle cx="7" cy="7" r="5.500"/><path d="M5 4.500h1.300v5H5zM7.700 4.500H9v5H7.700z"/></svg></button>
      <button type="button" aria-label="Стоп"><svg viewBox="0 0 14 14"><circle cx="7" cy="7" r="5.500"/><path d="M5 5h4v4H5z"/></svg></button>
      <i></i>
      <button type="button" aria-label="В начало"><svg viewBox="0 0 14 14"><circle cx="7" cy="7" r="5.500"/><path d="M4 4.500h1.300v5H4zM9.500 4.500v5L5.500 7z"/></svg></button>
      <button type="button" aria-label="Назад"><svg viewBox="0 0 14 14"><circle cx="7" cy="7" r="5.500"/><path d="M7 4.500v5L3.800 7zM10 4.500v5L6.800 7z"/></svg></button>
      <button type="button" aria-label="Вперед"><svg viewBox="0 0 14 14"><circle cx="7" cy="7" r="5.500"/><path d="M4 4.500v5L7.200 7zM7 4.500v5l3.200-2.500z"/></svg></button>
      <button type="button" aria-label="В конец"><svg viewBox="0 0 14 14"><circle cx="7" cy="7" r="5.500"/><path d="M4.500 4.500v5L8.500 7zM8.700 4.500H10v5H8.700z"/></svg></button>
      <i></i>
      <button type="button" aria-label="Кадр"><svg viewBox="0 0 14 14"><circle cx="7" cy="7" r="5.500"/><path d="M4.500 4.500h1.300v5H4.500zM6.500 4.500v5L10 7z"/></svg></button>
      <i></i>
      <div class="volume">
        <svg class="spk" viewBox="0 0 14 12"><path d="M1 4h3l4-3.500v11L4 8H1z" fill="#c9c4b4" stroke="#777" stroke-width=".7"/><path d="M2 5h3v3H2z" fill="#e08a2a"/><path d="M9.500 3.500q1.500 2.500 0 5M11.500 2q2 4 0 8" fill="none" stroke="#7ed348" stroke-width="1.300"/></svg>
        <div class="vol"><svg viewBox="0 0 40 18"><path d="M2 14L38 1" stroke="#888"/></svg><input type="range" value="100" aria-label="Громкость"></div>
      </div>
    </div>
  </section>
  <footer class="state">
    <svg viewBox="0 0 13 13"><path d="M3 3h9v9H3z" fill="#e8e8e8" stroke="#999"/><path d="M0 1h7l2 3H1z" fill="#ddd" stroke="#777" stroke-width=".6"/><path d="M5 6h2v2H5z" fill="#c33"/><path d="M8 6h3v2H8zM5 9h5v2H5z" fill="#567"/></svg>
    <span>Пауза</span>
    <span class="time">54:18 / 54:20</span>
    <svg viewBox="0 0 14 11"><path d="M4 2l3 2.500V7L4 9zM10 2L7 4.500V7l3 2z" fill="#e6e6e6"/><path d="M0 2h3M0 5.500h3M0 9h3M11 2h3M11 5.500h3M11 9h3" stroke="#7b9a35" stroke-dasharray="1 1"/></svg>
  </footer>
  <div class="taskbar outer">
    <button type="button" class="start" aria-label="Пуск"><svg><use href="#i-start"/></svg></button>
    <button type="button" class="run" aria-label="Яндекс"><svg><use href="#i-yandex"/></svg></button>
    <button type="button" aria-label="Chrome"><svg><use href="#i-chrome"/></svg></button>
    <button type="button" aria-label="Ножницы"><svg><use href="#i-snip"/></svg></button>
    <button type="button" aria-label="Проводник"><svg><use href="#i-folder"/></svg></button>
    <button type="button" class="run" aria-label="Браузер"><svg><use href="#i-globe"/></svg></button>
    <button type="button" class="run" aria-label="Клевер"><svg><use href="#i-clover"/></svg></button>
    <button type="button" class="run hot" aria-label="Плеер"><svg viewBox="0 0 30 30"><path d="M3 11h24v17H3z" fill="#fbfbf6" stroke="#171717"/><path d="M2 8L26 1v4L3 11z" fill="#fff" stroke="#222" stroke-width=".7"/><path d="M4 8l4-1 2 2-4 1zM12 5l4-1 2 2-4 1zM20 3l4-1 1 2-3 1zM4 11h4l-2 3H3zM12 11h4l-2 3h-4zM20 11h4l-2 3h-4z" fill="#171717"/><text x="5" y="26" class="d3">3</text><text x="12" y="26" class="d2">2</text><path d="M20 17h3v12h-3zM25 17h3v12h-3z" fill="#7ea6d5" stroke="#284c86" stroke-width=".8"/></svg></button>
    <div class="tray">
      <span class="lang">RU</span><svg class="car" viewBox="0 0 6 4"><path d="M0 4h6L3 0z" fill="#fff"/></svg><span class="ru">Ru</span>
      <svg><use href="#i-shield"/></svg><svg><use href="#i-mute"/></svg><svg><use href="#i-signal"/></svg><svg><use href="#i-net"/></svg>
      <time>14:03<br>21.01.2023</time><i class="peek"></i>
    </div>
  </div>
</div>
</body>
</html>
```
FILE: styles.css
```css
* { box-sizing: border-box; }
body { margin: 0; background: #000; font: 8px/12px "Open Sans", "Noto Sans", sans-serif; color: #2b2b2b; }
button { font: inherit; color: inherit; background: none; border: 0; padding: 0; margin: 0; white-space: nowrap; }
h1, h2 { margin: 0; font-weight: 400; white-space: nowrap; }
svg { display: block; flex: none; }
.sprite { position: absolute; width: 0; height: 0; }
.screen { display: flex; flex-direction: column; min-height: 100vh; }

/* window frames */
.titlebar { display: flex; align-items: center; height: 18px; padding-left: 2px; gap: 5px; border-top: 1px solid #4c5560; background: linear-gradient(#93b2d3, #b2cde8); }
.titlebar h1 { font-size: 10px; line-height: 16px; color: #16202c; }
.titlebar h2 { font-size: 8px; line-height: 12px; color: #27384c; }
.ic13 { width: 13px; height: 13px; }
.ic11 { width: 11px; height: 11px; }
.winbtns { display: flex; align-self: flex-start; gap: 2px; margin-left: auto; padding-right: 1px; }
.winbtns button { display: grid; place-items: center; width: 26px; height: 15px; border: 1px solid #62809f; border-top: 0; border-radius: 0 0 2px 2px; background: linear-gradient(#bfd3ea 50%, #8cadd0 50%, #a8c5e2); box-shadow: inset 0 0 0 1px #ffffff66; }
.winbtns svg { width: 12px; height: 12px; }
.winbtns .red { border-color: #7a3530; background: linear-gradient(#dd9183 50%, #bd3a22 50%, #d0684e); }
.titlebar.small { height: 14px; gap: 3px; border-top-color: #3d434b; }
.small .winbtns { gap: 1px; }
.small .winbtns button { width: 22px; height: 12px; }
.small .winbtns svg { width: 10px; height: 10px; }
.menubar { display: flex; align-items: center; height: 17px; padding-left: 5px; gap: 8px; font-size: 10px; line-height: 16px; background: linear-gradient(#fff 30%, #d7dff0 40%, #d9e1f2); border-bottom: 1px solid #f3f5fa; }
.menubar.mt { height: 14px; padding-left: 2px; gap: 11px; font-size: 8px; line-height: 12px; background: #efefef; border-bottom: 1px solid #d2d2d2; }
.mt .ic11 { margin-right: -6px; }
.mdi { display: flex; gap: 1px; margin-left: auto; }
.mdi button { display: grid; place-items: center; width: 13px; height: 12px; background: #dcebf8; border: 1px solid #b9d3ea; }
.mdi svg { width: 8px; height: 8px; }

/* video area */
.video { flex: 1; padding: 1px 114px 0; background: #000; display: flex; }
.desk { flex: 1; min-width: 0; display: flex; flex-direction: column; background: #efefef; }
.toolbar { display: flex; align-items: center; height: 20px; padding: 0 2px 0 3px; background: linear-gradient(#f6f6f6, #ececec); border-bottom: 1px solid #aaa; overflow: hidden; }
.toolbar button { display: flex; flex: none; align-items: center; justify-content: center; width: 19px; height: 17px; }
.toolbar button svg { width: 12px; height: 12px; }
.toolbar .on { background: #f9f9f9; border: 1px solid #d4d4d4; }
.toolbar .glyph { font-weight: 600; font-size: 9px; color: #555; }
.toolbar .arrows { width: 24px; }
.toolbar .arrows svg { width: 20px; }
.toolbar .auto { width: 75px; gap: 2px; background: #f6f6f6; }
.toolbar .tf { font-family: Roboto, sans-serif; font-size: 7px; color: #b5b5b5; }
.toolbar .tail { display: flex; margin-left: auto; gap: 3px; }
.toolbar .chat svg { width: 16px; }
.sep, .grip { flex: none; height: 16px; }
.sep { width: 5px; background: linear-gradient(#c4c4c4, #c4c4c4) center / 1px 100% no-repeat; }
.grip { width: 8px; border-left: 1px solid #c8c8c8; background: repeating-linear-gradient(#b8b8b8 0 1px, transparent 1px 2px) 4px 0 / 2px 100% no-repeat; }

.work { display: flex; height: 263px; background: #efefef; }
.market { flex: none; display: flex; flex-direction: column; width: 215px; padding: 0 5px 3px 3px; }
.caption { display: flex; align-items: center; justify-content: space-between; height: 10px; padding: 0 0 0 1px; background: linear-gradient(90deg, #c3d5e6, #d5e1ec 80%, #efefef 95%); color: #4b5a6b; line-height: 10px; }
.x { width: 8px; height: 8px; fill: none; stroke: #222; stroke-width: 1.5; }
.quotes { flex: 1; min-height: 0; display: flex; border-bottom: 1px solid #555; overflow: hidden; background: #fff; }
.market table { flex: 1; height: 236px; table-layout: fixed; border-collapse: collapse; }
.c-sym { width: 83px; }
.market th, .market td { padding: 0 2px; text-align: right; font-weight: 400; line-height: 11px; border-right: 1px solid #d6dcd6; border-bottom: 1px solid #d3dbd3; }
.market th { background: linear-gradient(#fff, #f1f2f4); color: #444; }
.market th:first-child { text-align: left; padding-left: 3px; }
.market td { background: #effdef; color: #2b3fc4; }
.market .dn td { color: #d34a2c; }
.market tr td:first-child { display: table-cell; text-align: left; color: #3c463c; }
.market td svg { display: inline-block; width: 7px; height: 7px; margin: 0 4px -1px 1px; }
.scroll { display: flex; flex-direction: column; align-items: center; width: 12px; background: #efefef; }
.scroll svg { width: 9px; height: 12px; }
.scroll .end { margin-top: auto; }
.scroll .thumb { width: 10px; height: 49px; border: 1px solid #a7a7a7; border-radius: 2px; background: repeating-linear-gradient(#888 0 1px, transparent 1px 2px) center / 5px 5px no-repeat, linear-gradient(90deg, #f6f6f6, #d5d5d5); }
.chart { flex: 1; min-width: 0; height: 263px; background: #000; }

.tabs { display: flex; height: 14px; color: #858585; line-height: 11px; }
.tabs button { position: relative; padding: 0 7px 1px; white-space: nowrap; }
.tabs button::after { content: ""; position: absolute; right: 0; top: 2px; height: 9px; border-right: 1px solid #999; }
.tabs .active { margin-left: -1px; margin-top: -1px; background: #fff; color: #222; border: 1px solid #555; border-top: 0; }
.tabs .active::after { display: none; }
.tabs sub { font-size: 8px; font-weight: 600; line-height: 0; vertical-align: -2px; color: #e0483a; margin-left: 1px; }
.market .tabs { height: 15px; padding-left: 1px; }
.dock .tabs { padding-left: 2px; }
.dock .tabs button { padding: 0 7px 1px 6px; }

/* chart strokes */
.grid path { fill: none; stroke: #5a6068; stroke-dasharray: 2 2; }
.grid .day { stroke: #9da3a8; }
.stops { fill: none; stroke: #9c1d14; stroke-width: 1.2; stroke-dasharray: 5 2 2 2 2 2; }
.stops.hot { stroke: #e0281c; }
.stops.gold { stroke: #a5762f; stroke-dasharray: 5 3; }
.loss { fill: none; stroke: #a01d14; stroke-dasharray: 4 1 1 1; }
.loss.hot { stroke: #f02416; }
.gain { fill: none; stroke: #15159a; }
.gain.dash { stroke-dasharray: 5 1; }
.bars { fill: none; stroke: #10b818; stroke-width: 1.5; }
.lbl text, .axis text { font: 7px "Noto Sans", sans-serif; fill: #d6d6d6; }
.lbl .dbl { font-weight: 600; fill: #fff; }
.axis .now { fill: #000; }

/* docked panels */
.dock { display: flex; padding: 0 2px 0 1px; }
.side { flex: none; display: flex; flex-direction: column; align-items: center; gap: 2px; width: 10px; overflow: hidden; }
.side span { flex: 1; width: 9px; writing-mode: vertical-rl; transform: rotate(180deg); line-height: 9px; background: linear-gradient(90deg, #9dbad8, #b4cfe9); color: #223; }
.body { flex: 1; min-width: 0; }
.term { height: 33px; padding-top: 2px; border-bottom: 1px solid #c4c4c4; }
.term .side { gap: 0; }
.term .side span { background: #c3d5e6; color: #567; }
.heads { display: grid; grid-template-columns: 676fr 328fr 34fr 12fr; align-items: end; height: 15px; padding-left: 3px; background: linear-gradient(#fff, #f3f5f7); border-top: 1px solid #ccc; border-bottom: 1px solid #666; }
.heads .date { display: flex; align-items: center; gap: 6px; }
.heads .date svg { width: 5px; height: 5px; }
.heads .spin { width: 6px; height: 12px; }
.tester { height: 208px; padding-top: 3px; border-bottom: 1px solid #c8c8c8; }
.sheet { height: 188px; background: #fff; border-top: 1px solid #999; border-bottom: 1px solid #666; }
.tester table { width: 100%; height: 180px; table-layout: fixed; border-collapse: collapse; }
.tester td { height: 13px; padding: 0; line-height: 11px; white-space: nowrap; border-bottom: 1px solid #dcdcdc; }
.tester tr:nth-child(odd) td { background: #ebebeb; }
.tester td:nth-child(odd) { padding-left: 28px; }
.tester td:first-child { padding-left: 4px; }
.tester td:nth-child(even) { text-align: right; }
.tester td:last-child { padding-right: 4px; }
.k1 { width: 17%; }
.v1 { width: 14.6%; }
.k2 { width: 22%; }
.v2 { width: 12%; }
.tester tr td.gauge { padding: 0 2px 0 26px; }
.gauge div { height: 12px; background: #00d800; border: 1px solid #6aa5dc; }
.gauge i { display: block; width: 25%; height: 100%; background: #adadad; }

.status { display: grid; grid-template-columns: 579fr 83fr 72fr 50fr 49fr 47fr 48fr 46fr 88fr; align-items: end; height: 18px; padding: 1px 0; }
.status span { height: 14px; padding-left: 3px; border-left: 1px solid #c3c3c3; line-height: 14px; white-space: nowrap; }
.status span:first-child { border: 0; padding-left: 1px; }
.status .net { display: flex; align-items: center; gap: 2px; }
.net svg { width: 18px; height: 10px; }

/* taskbars */
.taskbar { display: flex; gap: 2px; border-top: 1px solid #5d7187; background: linear-gradient(90deg, #a5c0de 79%, #8095ae 84%); }
.taskbar > button { display: grid; place-items: center; }
.taskbar .start { background: #8198b3; }
.taskbar .run { border: 1px solid #6f8aa8; border-radius: 2px; background: linear-gradient(135deg, #d3e1f0, #b1c9e4 60%); box-shadow: inset 0 0 0 1px #ffffff66; }
.taskbar .hot { background: linear-gradient(135deg, #fbf8c0, #eee85a 60%); }
.inner { height: 27px; margin-top: auto; }
.inner > button { width: 37px; height: 26px; }
.inner > button svg { width: 23px; height: 23px; }
.inner .alpari { font-size: 8px; line-height: 8px; font-weight: 600; color: #333; background: #e6eef6; align-content: center; }
.inner .alpari svg { width: 22px; height: 13px; }
.outer { height: 33px; padding-left: 1px; }
.outer > button { width: 45px; height: 32px; }
.outer > button svg { width: 28px; height: 28px; }
.d3, .d2 { font: 700 12px "Open Sans", sans-serif; fill: #df5a24; }
.d2 { fill: #2757b8; }
.tray { display: flex; align-items: center; margin-left: auto; color: #f2f6fa; gap: 6px; }
.tray svg { width: 11px; height: 11px; }
.tray .car { width: 5px; height: 3px; margin: 0 5px; }
.tray .ru { padding: 0 1px; background: #7d7d7d; line-height: 11px; }
.tray time { text-align: center; }
.peek { align-self: stretch; border-left: 1px solid #50657d; background: linear-gradient(120deg, #9db4cd, #50657d); }
.inner time { padding: 0 1px 0 4px; }
.inner .peek { width: 8px; }
.outer .tray { font-size: 9px; line-height: 14px; gap: 9px; }
.outer .tray svg { width: 12px; height: 12px; }
.outer .tray .car { width: 6px; height: 4px; margin: 0 4px; }
.outer .peek { width: 10px; }
.outer time { padding: 0 0 0 6px; }

/* player */
.player { height: 41px; padding: 4px 1px 0 1px; background: #efefef; border-top: 1px solid #fff; }
.player input { appearance: none; display: block; margin: 0; background: none; }
.seek { width: 100%; height: 12px; padding-left: 5px; }
.seek::-webkit-slider-runnable-track { height: 6px; background: #fff; border-top: 1px solid #8d8d8d; border-left: 1px solid #8d8d8d; }
.seek::-webkit-slider-thumb { appearance: none; width: 12px; height: 12px; margin-top: -4px; background: #f4f4f4; border: 1px solid #fff; border-right-color: #555; border-bottom-color: #555; }
.controls { display: flex; align-items: center; height: 22px; }
.controls button { display: grid; place-items: center; width: 21px; height: 18px; border: 1px solid transparent; }
.controls button svg { width: 14px; height: 14px; }
.controls button circle { fill: none; stroke: #333; stroke-width: 1.2; }
.controls button path { fill: #222; }
.controls .on { border-color: #777; border-radius: 2px; background: #dcdcdc; }
.controls > i { width: 1px; height: 17px; margin: 0 2px; background: #999; }
.volume { display: flex; align-items: center; gap: 9px; margin-left: auto; padding-right: 2px; }
.spk { width: 14px; height: 12px; }
.vol { display: grid; width: 40px; }
.vol > * { grid-area: 1 / 1; width: 40px; height: 18px; }
.vol input::-webkit-slider-thumb { appearance: none; width: 9px; height: 16px; background: #f4f4f4; border: 1px solid #fff; border-right-color: #444; border-bottom-color: #444; }
.state { display: flex; align-items: center; height: 18px; gap: 4px; padding: 0 6px 0 4px; background: #000; color: #ececec; font-size: 10px; line-height: 16px; }
.state svg { width: 13px; height: 13px; }
.state .time { margin-left: auto; font-size: 9px; padding-right: 4px; }
```
